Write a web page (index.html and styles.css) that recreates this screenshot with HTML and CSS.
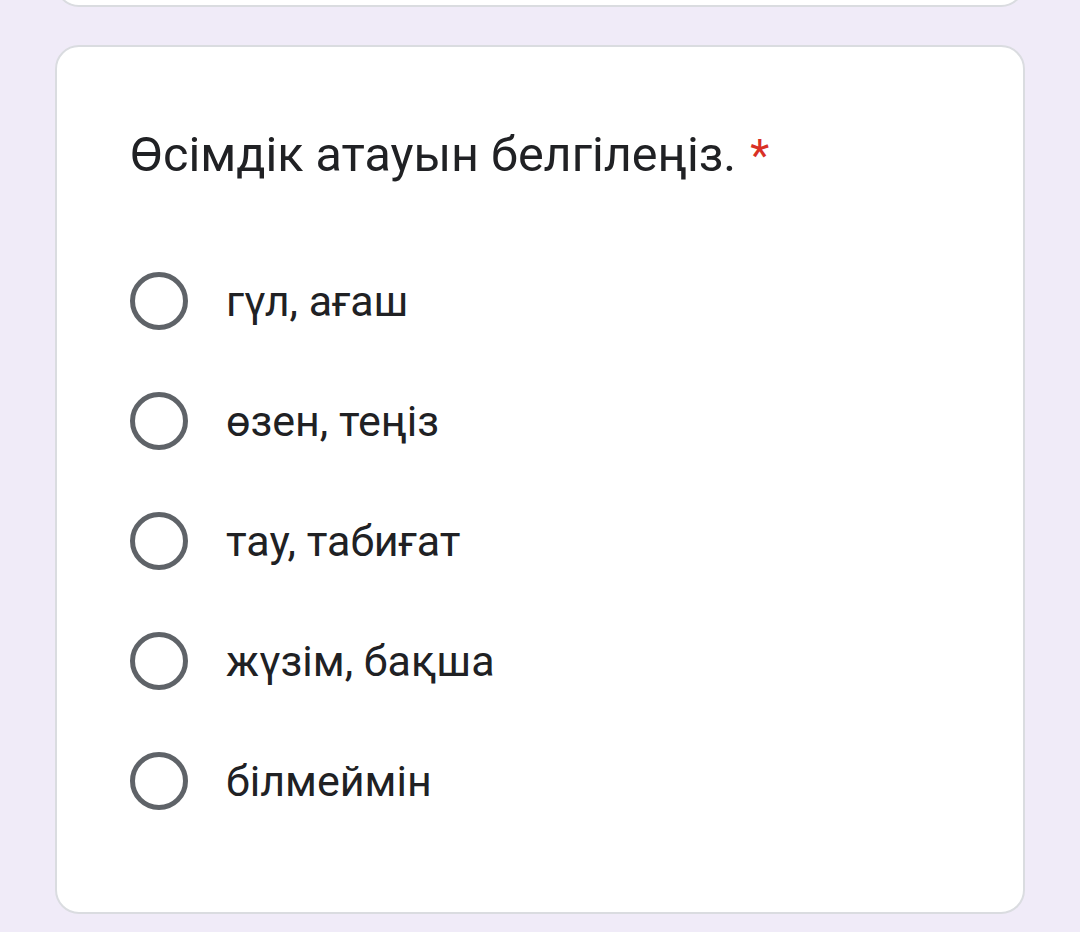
FILE: index.html
```html
<!DOCTYPE html>
<html lang="kk">
<head>
<meta charset="utf-8">
<link rel="stylesheet" href="styles.css">
</head>
<body>
<div class="page">
  <div class="card card-prev"></div>
  <div class="card question">
    <div class="title">Өсімдік атауын белгілеңіз. <span class="req">*</span></div>
    <div class="options">
      <div class="option"><span class="radio"></span><span class="label">гүл, ағаш</span></div>
      <div class="option"><span class="radio"></span><span class="label">өзен, теңіз</span></div>
      <div class="option"><span class="radio"></span><span class="label">тау, табиғат</span></div>
      <div class="option"><span class="radio"></span><span class="label">жүзім, бақша</span></div>
      <div class="option"><span class="radio"></span><span class="label">білмеймін</span></div>
    </div>
  </div>
</div>
</body>
</html>
```
FILE: styles.css
```css
html, body {
  margin: 0;
  padding: 0;
  background: #f0ebf8;
  font-family: Roboto, "Noto Sans", sans-serif;
  color: #202124;
}
.page {
  width: 1080px;
  height: 932px;
  overflow: hidden;
  padding: 0 55px;
  box-sizing: border-box;
}
.card {
  background: #fff;
  border: 2px solid #dadce0;
  border-radius: 24px;
  box-sizing: border-box;
}
.card-prev {
  height: 60px;
  margin-top: -53px;
}
.question {
  margin-top: 38px;
  height: 869px;
  padding: 80px 0 0 73px;
}
.title {
  font-size: 48.5px;
  line-height: 56px;
}
.req {
  color: #d93025;
  font-size: 44px;
  margin-left: 2px;
}
.options {
  margin-top: 87px;
  display: flex;
  flex-direction: column;
  gap: 60px;
}
.option {
  display: flex;
  align-items: center;
  height: 60px;
}
.radio {
  width: 58px;
  height: 58px;
  border: 5px solid #5f6368;
  border-radius: 50%;
  box-sizing: border-box;
  flex: none;
}
.label {
  margin-left: 38px;
  font-size: 43px;
  line-height: 50px;
}
```
